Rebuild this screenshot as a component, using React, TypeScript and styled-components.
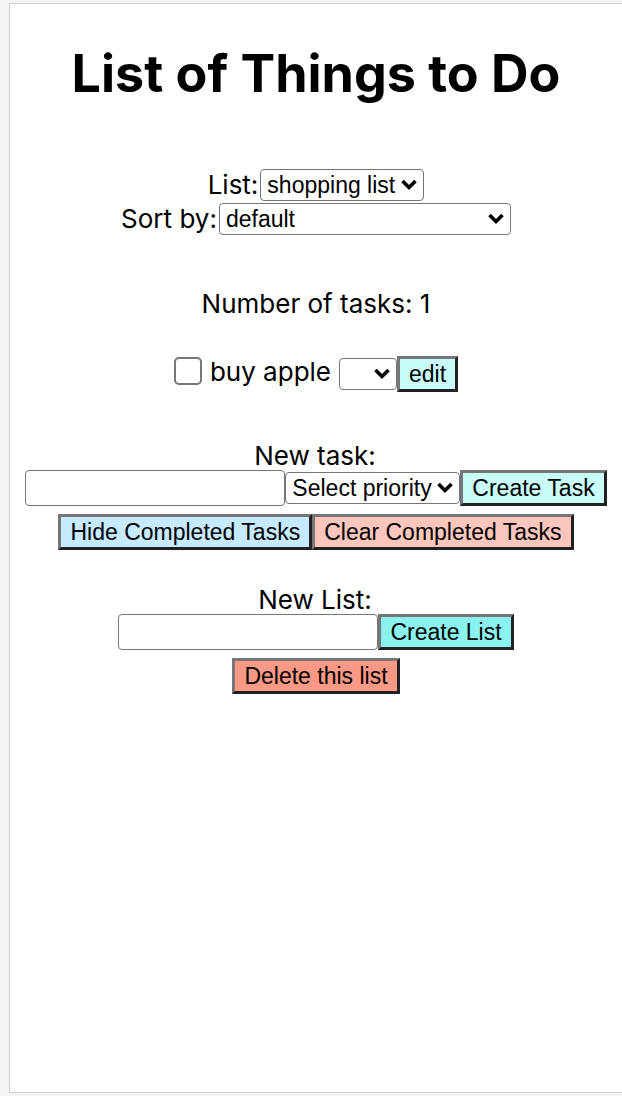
import React, { useId } from "react";
import styled, { createGlobalStyle } from "styled-components";

const GlobalStyle = createGlobalStyle`
  * { box-sizing: border-box; }
  body {
    margin: 0;
    background: #f4f5f5;
    color: #000;
    font: 400 26px/32px Inter, "Liberation Sans", sans-serif;
  }
`;

const Page = styled.div`
  min-height: 100vh;
  display: flex;
  padding: 3px 0 3px 9px;
`;

const Panel = styled.main`
  flex: 1;
  min-width: 0;
  display: flex;
  flex-direction: column;
  align-items: center;
  background: #fff;
  border: 1px solid #cccfcf;
  border-right: 0;
`;

const Title = styled.h1`
  margin: 36px 0 0;
  font-size: 52px;
  line-height: 68px;
  font-weight: 700;
  text-align: center;
`;

const Section = styled.section<{ $top: number; $gap?: number }>`
  display: flex;
  flex-direction: column;
  align-items: center;
  width: 100%;
  margin-top: ${(p) => p.$top}px;
  gap: ${(p) => p.$gap ?? 0}px;
`;

const Row = styled.div`
  display: flex;
  align-items: center;
  justify-content: center;
`;

const FieldLabel = styled.label`
  line-height: 28px;
  padding-right: 2px;
  white-space: nowrap;
`;

const Count = styled.p`
  margin: 0;
`;

const SelectBox = styled.span<{ $width: number }>`
  position: relative;
  display: flex;
  width: ${(p) => p.$width}px;
  height: 32px;
`;

const NativeSelect = styled.select`
  appearance: none;
  width: 100%;
  padding: 0 0 0 6px;
  border: 1px solid #767676;
  border-radius: 4px;
  background: #fff;
  color: #000;
  font: 23px/28px "Liberation Sans", Arial, sans-serif;
`;

const Chevron = styled.svg`
  position: absolute;
  right: 6px;
  top: 10px;
  width: 18px;
  height: 12px;
  pointer-events: none;
`;

const TextInput = styled.input`
  width: 260px;
  height: 36px;
  padding: 2px 4px;
  border: 1px solid #767676;
  border-radius: 4px;
  background: #fff;
  font: 23px/28px "Liberation Sans", Arial, sans-serif;
`;

const Button = styled.button<{ $color: string }>`
  height: 36px;
  padding: 0 9px;
  border: 3px solid;
  border-color: #767676 #212121 #212121 #767676;
  background: ${(p) => p.$color};
  color: #000;
  font: 23px/28px "Liberation Sans", Arial, sans-serif;
  white-space: nowrap;
`;

const Task = styled.div`
  display: flex;
  align-items: center;
  gap: 8px;
  padding: 0 8px 4px 0;
`;

const Checkbox = styled.input`
  appearance: none;
  width: 28px;
  height: 28px;
  margin: 0 0 2px;
  border: 2px solid #767676;
  border-radius: 5px;
  background: #fff;

  &:checked {
    background: #1a73e8;
  }
`;

type SelectProps = {
  id?: string;
  label?: string;
  width: number;
  options: string[];
};

function Select({ id, label, width, options }: SelectProps) {
  return (
    <SelectBox $width={width}>
      <NativeSelect id={id} aria-label={label}>
        {options.map((o) => (
          <option key={o}>{o}</option>
        ))}
      </NativeSelect>
      <Chevron viewBox="0 0 18 12" aria-hidden="true">
        <path d="M2.5 2 9 8.5 15.5 2" fill="none" stroke="#000" strokeWidth="3.6" />
      </Chevron>
    </SelectBox>
  );
}

export default function App() {
  const id = useId();
  return (
    <>
      <GlobalStyle />
      <Page>
        <Panel>
          <Title>List of Things to Do</Title>

          <Section $top={61} $gap={2}>
            <Row>
              <FieldLabel htmlFor={`${id}-list`}>List:</FieldLabel>
              <Select id={`${id}-list`} width={164} options={["shopping list"]} />
            </Row>
            <Row>
              <FieldLabel htmlFor={`${id}-sort`}>Sort by:</FieldLabel>
              <Select id={`${id}-sort`} width={292} options={["default"]} />
            </Row>
          </Section>

          <Section $top={53} $gap={36}>
            <Count>Number of tasks: 1</Count>
            <Row>
              <Task>
                <Checkbox type="checkbox" id={`${id}-task`} />
                <label htmlFor={`${id}-task`}>buy apple</label>
              </Task>
              <Select label="Priority" width={58} options={[""]} />
              <Button type="button" $color="#c8fdf8">edit</Button>
            </Row>
          </Section>

          <Section $top={50}>
            <FieldLabel htmlFor={`${id}-new-task`}>New task:</FieldLabel>
            <Row>
              <TextInput id={`${id}-new-task`} type="text" />
              <Select label="Task priority" width={175} options={["Select priority"]} />
              <Button type="button" $color="#c8fdf8">Create Task</Button>
            </Row>
          </Section>
          <Section $top={8}>
            <Row>
              <Button type="button" $color="#c6eaff">Hide Completed Tasks</Button>
              <Button type="button" $color="#fdc6bd">Clear Completed Tasks</Button>
            </Row>
          </Section>

          <Section $top={36}>
            <FieldLabel htmlFor={`${id}-new-list`}>New List:</FieldLabel>
            <Row>
              <TextInput id={`${id}-new-list`} type="text" />
              <Button type="button" $color="#8af3ef">Create List</Button>
            </Row>
          </Section>
          <Section $top={8}>
            <Button type="button" $color="#fc9986">Delete this list</Button>
          </Section>
        </Panel>
      </Page>
    </>
  );
}
